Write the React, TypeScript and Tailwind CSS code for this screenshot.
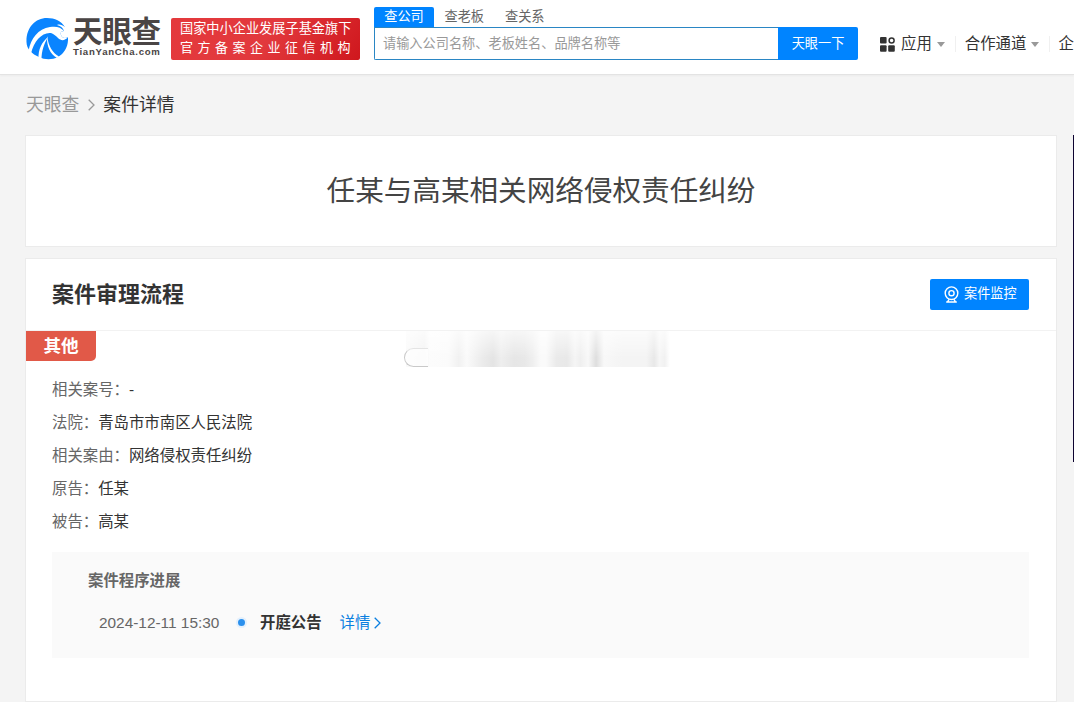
import type { ReactNode } from "react";

type CaseField = {
  label: string;
  value: string;
};

const searchTabs = ["查公司", "查老板", "查关系"];

const caseFields: CaseField[] = [
  { label: "相关案号：", value: "-" },
  { label: "法院：", value: "青岛市市南区人民法院" },
  { label: "相关案由：", value: "网络侵权责任纠纷" },
  { label: "原告：", value: "任某" },
  { label: "被告：", value: "高某" },
];

function LogoMark() {
  return (
    <svg
      aria-hidden="true"
      className="h-[42px] w-[42px] shrink-0"
      viewBox="0 0 42 42"
      fill="none"
    >
      <path
        d="M.5 24C0 10 9 0 21 0c8 0 14 3 18 9-3-2-5-3-8-2 4 1 6 3 7 6-3 0-4 2-3 4 1 3 4 4 7 2 .5 9-3 16-10 20-6 3-13 3-19 0C6 36 .5 31 .5 24Z"
        fill="#0A84FF"
      />
      <path
        d="M2.500 33C5 20 12 11 24 9c6-1 11 0 14 4-3 0-4 2-3 4 1 3 4 4 7 2-3 4-7 4-10 1-2-2-4-4-7-5C16 14 8 23 5 35.500Z"
        fill="#fff"
      />
      <path d="M12.500 41.500C12 31 16 24 22 19c-4 7-6.500 14-6.500 23Z" fill="#fff" />
      <path d="M21 18c1.500 10 5.500 17 12 20.500l-2 1.500C24 36 20.500 28 21 18Z" fill="#fff" />
    </svg>
  );
}

function AppsIcon() {
  return (
    <svg
      aria-hidden="true"
      className="mr-[6px] size-[15px]"
      viewBox="0 0 15 15"
      fill="#333"
    >
      <rect width="6.6" height="6.6" rx="1" />
      <rect y="8.2" width="6.6" height="6.6" rx="1" />
      <rect x="8.2" y="8.2" width="6.6" height="6.6" rx="1" />
      <circle cx="11.6" cy="3.4" r="2.5" fill="none" stroke="#333" strokeWidth="1.5" />
    </svg>
  );
}

function CameraIcon() {
  return (
    <svg
      aria-hidden="true"
      className="mr-[5px] h-[17px] w-[15px]"
      viewBox="0 0 15 17"
      fill="none"
      stroke="#fff"
      strokeWidth="1.4"
    >
      <circle cx="7.5" cy="7.2" r="6.3" />
      <circle cx="7.5" cy="7.2" r="2.6" />
      <path d="M5 13.3 3.6 15.8M10 13.3l1.4 2.5M2.2 16h10.6" />
    </svg>
  );
}

function Chevron({ className }: { className: string }) {
  return (
    <svg
      aria-hidden="true"
      className={className}
      viewBox="0 0 7 12"
      fill="none"
      stroke="currentColor"
      strokeWidth="1.3"
    >
      <path d="m.7.7 5.3 5.3-5.3 5.3" />
    </svg>
  );
}

function Caret() {
  return (
    <svg aria-hidden="true" className="ml-[5px] h-[5px] w-2" viewBox="0 0 8 5" fill="#999">
      <path d="M0 0h8L4 5Z" />
    </svg>
  );
}

function NavItem({ children }: { children: ReactNode }) {
  return (
    <div className="flex shrink-0 items-center text-[15.4px] leading-5 text-[#333]">
      {children}
    </div>
  );
}

function Header() {
  return (
    <header className="flex h-[75px] items-start overflow-hidden border-b border-[#e3e3e3] bg-white pl-[26px] shadow-[0_1px_2px_rgba(0,0,0,0.04)]">
      <div className="flex shrink-0 pt-[18px]">
        <LogoMark />
        <div className="ml-[5px] w-[98px]">
          <div className="text-[29.5px] leading-[28px] font-bold tracking-[-0.2px] text-[#4a4545]">
            天眼查
          </div>
          <div className="mt-px text-[9.6px] leading-[10px] font-bold tracking-[0.75px] text-[#4a4545]">
            TianYanCha.com
          </div>
        </div>
      </div>

      <div className="mt-[18px] h-[42px] w-[189px] shrink-0 rounded-[2px] bg-[linear-gradient(125deg,#e4393c_0%,#e2393d_50%,#cf171d_100%)] pt-[1px] pl-[9px] text-white">
        <div className="text-[13.2px] leading-[19px] whitespace-nowrap">国家中小企业发展子基金旗下</div>
        <div className="text-[13px] leading-[19px] tracking-[4.5px] whitespace-nowrap">官方备案企业征信机构</div>
      </div>

      <div className="ml-[14px] w-[484px] shrink-0 pt-[7px]">
        <div className="flex h-5 text-[13.2px] leading-[19px] text-[#666]">
          {searchTabs.map((tab, index) => (
            <div
              key={tab}
              className={
                index === 0
                  ? "w-[60px] rounded-t-[2px] bg-[#0084ff] text-center text-white"
                  : "w-[60.5px] text-center"
              }
            >
              {tab}
            </div>
          ))}
        </div>
        <div className="flex h-[33px]">
          <div className="flex-1 rounded-bl-[2px] border border-r-0 border-[#2a86c4] pl-[8px] text-[13.2px] leading-[31px] text-[#999]">
            请输入公司名称、老板姓名、品牌名称等
          </div>
          <div className="w-[80px] rounded-r-[2px] bg-[#0084ff] text-center text-[13.2px] leading-[33px] text-white">
            天眼一下
          </div>
        </div>
      </div>

      <nav className="mt-[34px] ml-[22px] flex h-[20px] shrink-0 items-center">
        <NavItem>
          <AppsIcon />
          应用
          <Caret />
        </NavItem>
        <span className="mr-[9px] ml-[10px] h-4 w-px bg-[#f0f0f0]" />
        <NavItem>
          合作通道
          <Caret />
        </NavItem>
        <span className="mr-[8px] ml-[10px] h-4 w-px bg-[#f0f0f0]" />
        <NavItem>企</NavItem>
      </nav>
    </header>
  );
}

/* Smeared strip left where the watermark has been wiped off the page */
function Smudge() {
  return (
    <div className="absolute top-0 left-[378px] h-[37px] w-[266px]">
      <div className="ml-[2px] h-[36px] w-[264px] bg-[linear-gradient(90deg,#fafafa_0%,#f3f3f3_7%,#fcfcfc_9%,#fbfbfb_16%,#f1f1f1_20%,#fafafa_23%,#ebebeb_29%,#e4e4e4_33%,#eeeeee_36%,#e6e6e6_41%,#e8e8e8_45%,#efefef_48%,#fafafa_51%,#fafafa_53%,#eaeaea_57%,#e8e8e8_61%,#f5f5f5_64%,#efefef_66%,#f8f8f8_69%,#dedede_72%,#f8f8f8_75%,#f4f4f4_82%,#f4f4f4_91%,#e8e8e8_94%,#f6f6f6_96%,#f1f1f1_98%,#fff_100%)] mask-[linear-gradient(180deg,rgba(0,0,0,0.35)_0%,black_75%)]" />
      <div className="absolute top-[17px] left-0 h-[19px] w-[24px] rounded-l-full border border-r-0 border-[#c9c9c9] border-t-[#e4e4e4] bg-white/70" />
    </div>
  );
}

export default function App() {
  return (
    <div className="h-[702px] w-[1074px] overflow-hidden bg-[#f4f4f4] font-['Liberation_Sans','Noto_Sans_CJK_SC',sans-serif]">
      <Header />

      <div className="flex h-[60px] items-center pl-[26px] text-[17.8px] leading-6 text-[#999]">
        天眼查
        <Chevron className="mr-[8px] ml-[9px] h-[12px] w-[7px]" />
        <span className="text-[#333]">案件详情</span>
      </div>

      <div className="flex items-start">
        <main className="ml-[25px] w-[1032px] shrink-0">
          <section className="flex h-[112px] items-center justify-center border border-[#ebebeb] bg-white">
            <h1 className="text-[28.6px] leading-10 text-[#444]">
              任某与高某相关网络侵权责任纠纷
            </h1>
          </section>

          <section className="mt-[11px] h-[444px] border border-[#ebebeb] bg-white">
            <div className="flex h-[72px] items-center justify-between border-b border-[#f2f2f2] pr-[27px] pl-[26px]">
              <h2 className="text-[22px] leading-8 font-bold text-[#333]">案件审理流程</h2>
              <button className="flex h-[31px] w-[99px] items-center rounded-[2px] bg-[#0084ff] pb-px pl-[14px] text-[13.2px] text-white">
                <CameraIcon />
                案件监控
              </button>
            </div>

            <div className="relative">
              <Smudge />
              <div className="h-[30px] w-[70px] rounded-br-[5px] bg-[#e15948] text-center text-[17.6px] leading-[30px] font-bold text-white">
                其他
              </div>

              <div className="pt-[12px] pl-[26px] text-[15.4px] leading-[33px]">
                {caseFields.map((field) => (
                  <div key={field.label} className="flex">
                    <span className="text-[#666]">{field.label}</span>
                    <span className="text-[#333]">{field.value}</span>
                  </div>
                ))}
              </div>

              <div className="mt-[14px] ml-[26px] h-[106px] w-[977px] bg-[#fafafa] pt-[17px] pl-[36px]">
                <h3 className="text-[15.4px] leading-6 font-bold text-[#666]">案件程序进展</h3>
                <div className="mt-[18px] flex items-center pl-[11px] text-[15.4px] leading-6">
                  <span className="w-[137px] text-[#666]">2024-12-11 15:30</span>
                  <span className="mb-[2px] size-[11px] rounded-full border-2 border-[#e3f0fd] bg-[#2b90ed]" />
                  <span className="ml-[13px] font-bold text-[#333]">开庭公告</span>
                  <a className="ml-[18px] flex items-center text-[#0a7fe0]">
                    详情
                    <Chevron className="ml-[4px] h-[12px] w-[7px]" />
                  </a>
                </div>
              </div>
            </div>
          </section>
        </main>
        <aside className="ml-[16px] h-[327px] w-px bg-[#0d0330]" />
      </div>
    </div>
  );
}
